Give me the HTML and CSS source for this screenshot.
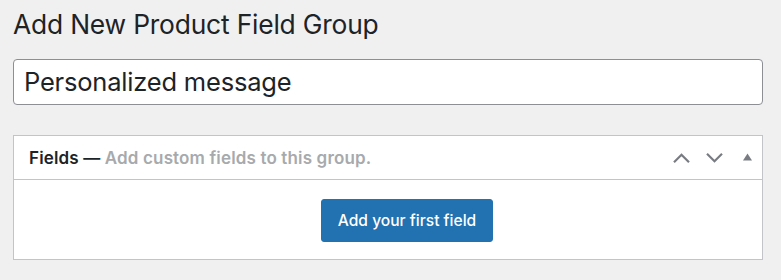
FILE: index.html
```html
<!DOCTYPE html>
<html>
<head>
<meta charset="utf-8">
<link rel="stylesheet" href="styles.css">
</head>
<body>
<div class="wrap">
  <h1 class="page-title">Add New Product Field Group</h1>
  <div class="title-input">Personalized message</div>
  <div class="postbox">
    <div class="postbox-header">
      <h2 class="postbox-title">Fields — <span class="desc">Add custom fields to this group.</span></h2>
      <div class="handles">
        <svg class="icon" width="17" height="12" viewBox="0 0 17 12"><path d="M1 10.2 L8.5 2.7 L16 10.2" fill="none" stroke="#787c82" stroke-width="2.2"/></svg>
        <svg class="icon" width="17" height="12" viewBox="0 0 17 12"><path d="M1 1.8 L8.5 9.3 L16 1.8" fill="none" stroke="#787c82" stroke-width="2.2"/></svg>
        <svg class="icon tri" width="9" height="8" viewBox="0 0 9 8"><path d="M0 7.5 L4.5 0.5 L9 7.5 Z" fill="#787c82"/></svg>
      </div>
    </div>
    <div class="postbox-body">
      <button class="btn-primary">Add your first field</button>
    </div>
  </div>
</div>
</body>
</html>
```

FILE: styles.css
```css
html, body {
  margin: 0;
  padding: 0;
  background: #f0f0f1;
}
body {
  font-family: "Inter", "Noto Sans", sans-serif;
  color: #1d2327;
}
.wrap {
  padding: 6px 18px 0 13px;
}
.page-title {
  margin: 0;
  font-size: 26.4px;
  font-weight: 400;
  line-height: 36px;
  letter-spacing: -0.2px;
}
.title-input {
  margin-top: 17px;
  box-sizing: border-box;
  height: 46px;
  border: 1px solid #8c8f94;
  border-radius: 4px;
  background: #fff;
  padding: 0 10px;
  font-size: 25.5px;
  line-height: 44px;
  letter-spacing: -0.2px;
}
.postbox {
  margin-top: 30px;
  border: 1px solid #c3c4c7;
  background: #fff;
}
.postbox-header {
  display: flex;
  align-items: center;
  justify-content: space-between;
  height: 43px;
  border-bottom: 1px solid #c3c4c7;
  padding: 0 10px 0 15px;
}
.postbox-title {
  margin: 0;
  font-size: 17px;
  font-weight: 600;
  line-height: 20px;
  letter-spacing: 0.15px;
}
.desc {
  color: #a7aaad;
  font-weight: 600;
}
.handles {
  display: flex;
  align-items: center;
}
.icon { display: block; }
.icon + .icon { margin-left: 16px; }
.icon.tri { margin-left: 20px; margin-top: -1px; }
.postbox-body {
  display: flex;
  justify-content: center;
  padding: 19px 0 17px 38px;
}
.btn-primary {
  background: #2271b1;
  border: 1px solid #2271b1;
  border-radius: 3px;
  color: #fff;
  font-family: "Inter", "Noto Sans", sans-serif;
  font-size: 15.6px;
  font-weight: 500;
  height: 43px;
  width: 172px;
  padding: 0;
}
```
